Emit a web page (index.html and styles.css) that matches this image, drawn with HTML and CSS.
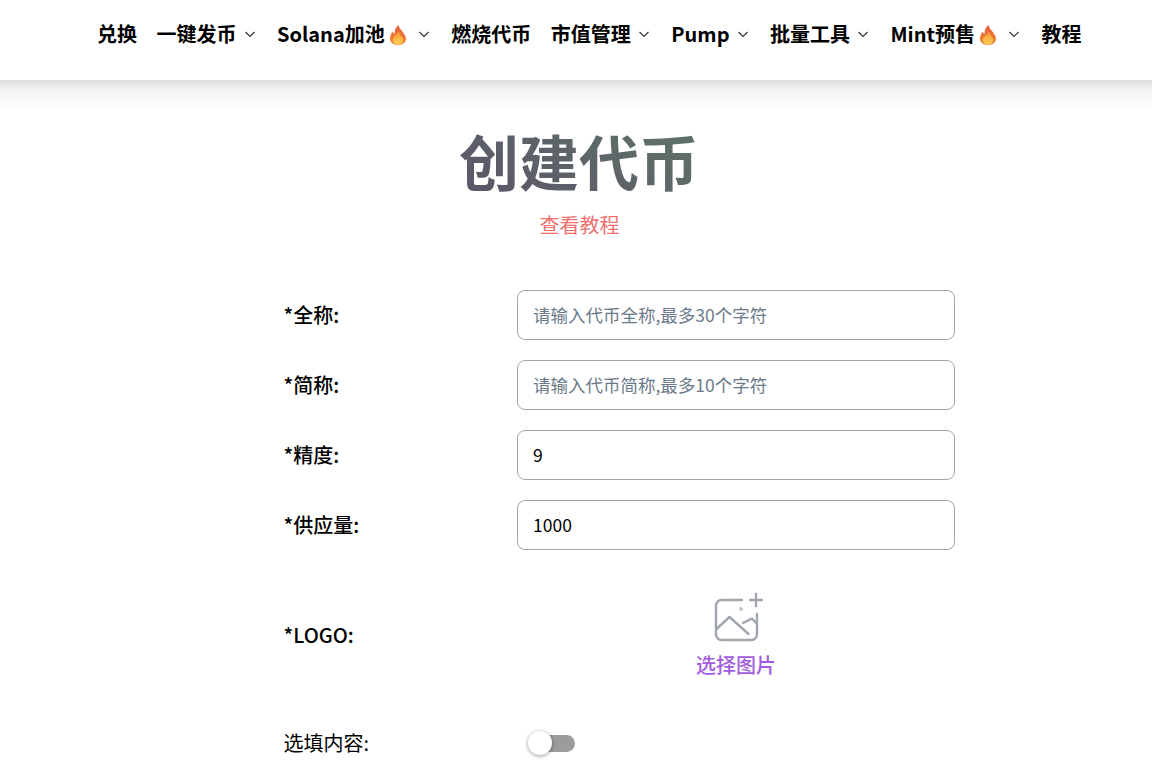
FILE: index.html
```html
<!DOCTYPE html>
<html lang="zh-CN">
<head>
<meta charset="utf-8">
<title>创建代币</title>
<link rel="stylesheet" href="styles.css">
</head>
<body>
<svg class="defs" width="0" height="0" aria-hidden="true">
  <defs>
    <linearGradient id="flame-outer" x1="0" y1="0" x2="0" y2="1">
      <stop offset="0" stop-color="#e5603f"/>
      <stop offset="1" stop-color="#f5882a"/>
    </linearGradient>
    <linearGradient id="flame-inner" x1="0" y1="0" x2="0" y2="1">
      <stop offset="0" stop-color="#fa9a35"/>
      <stop offset="1" stop-color="#fdcf55"/>
    </linearGradient>
    <symbol id="chev" viewBox="0 0 16 16">
      <path d="M3.500 6L8 10.500 12.500 6" fill="none" stroke="#333" stroke-width="1.200"/>
    </symbol>
    <symbol id="flame" viewBox="0 0 16 20">
      <path d="M8.500 0c.6 3 2.500 4.600 4.300 7 1.600 2.200 3.200 4.300 3.200 6.800C16 17.500 12.600 20 8 20s-8-2.500-8-6.200c0-3.200 1.500-5.300 2.700-7.300.4 1.200.9 2 1.800 2.500C4.400 5 5.800 2 8.500 0z" fill="url(#flame-outer)"/>
      <path d="M8.800 6.500c.3 2 1.500 3.200 2.600 4.700.9 1.200 1.800 2.400 1.800 3.900 0 2.800-2.400 4.400-5.200 4.400s-5.200-1.600-5.200-4.400c0-3.500 4.300-4.800 6-8.600z" fill="url(#flame-inner)"/>
    </symbol>
  </defs>
</svg>

<header class="topbar">
  <nav class="nav">
    <a class="nav-item">兑换</a>
    <a class="nav-item">一键发币<svg class="chev"><use href="#chev"/></svg></a>
    <a class="nav-item">Solana加池<svg class="flame"><use href="#flame"/></svg><svg class="chev"><use href="#chev"/></svg></a>
    <a class="nav-item">燃烧代币</a>
    <a class="nav-item">市值管理<svg class="chev"><use href="#chev"/></svg></a>
    <a class="nav-item">Pump<svg class="chev"><use href="#chev"/></svg></a>
    <a class="nav-item">批量工具<svg class="chev"><use href="#chev"/></svg></a>
    <a class="nav-item">Mint预售<svg class="flame"><use href="#flame"/></svg><svg class="chev"><use href="#chev"/></svg></a>
    <a class="nav-item">教程</a>
  </nav>
</header>

<main class="main">
  <div class="head">
    <h1 class="title">创建代币</h1>
    <a class="tutorial">查看教程</a>
  </div>

  <form class="form">
    <div class="row">
      <label class="label">*全称:</label>
      <input class="input" type="text" placeholder="请输入代币全称,最多30个字符">
    </div>
    <div class="row">
      <label class="label">*简称:</label>
      <input class="input" type="text" placeholder="请输入代币简称,最多10个字符">
    </div>
    <div class="row">
      <label class="label">*精度:</label>
      <input class="input" type="text" value="9">
    </div>
    <div class="row">
      <label class="label">*供应量:</label>
      <input class="input" type="text" value="1000">
    </div>
    <div class="row row-logo">
      <label class="label">*LOGO:</label>
      <div class="upload">
        <svg class="upload-icon" viewBox="0 0 50 50" fill="none" stroke="#a0a5ae" stroke-width="2.400" stroke-linecap="round" stroke-linejoin="round">
          <path d="M28 8H7.500A5.500 5.500 0 0 0 2 13.500v29A5.500 5.500 0 0 0 7.500 48h30a5.500 5.500 0 0 0 5.500-5.500V22"/>
          <path d="M2.500 37l13-12 19 17"/>
          <path d="M29 31l9-4.500 5 5.500"/>
          <path d="M36 8h12M42 2v12"/>
          <circle cx="27" cy="17" r=".5"/>
        </svg>
        <span class="upload-text">选择图片</span>
      </div>
    </div>
    <div class="row row-switch">
      <span class="label label-plain">选填内容:</span>
      <span class="switch"><span class="knob"></span></span>
    </div>
  </form>
</main>
</body>
</html>
```
FILE: styles.css
```css
* { box-sizing: border-box; }
html, body { height: 767px; overflow: hidden; }
body {
  margin: 0;
  background: #fff;
  color: #000;
  font-family: "Noto Sans CJK SC", "Noto Sans", sans-serif;
  font-size: 20px;
}
.defs { position: absolute; }
.topbar {
  height: 80px;
  background: #fff;
  position: relative;
}
.topbar::after {
  content: "";
  position: absolute;
  left: 0;
  right: 0;
  top: 100%;
  height: 32px;
  background: linear-gradient(#dcdcdc, #f1f1f1 30%, #fafafa 60%, #fff);
}
.nav {
  height: 80px;
  display: flex;
  align-items: center;
  gap: 19.500px;
  padding: 0 0 12px 97px;
  font-weight: 700;
  white-space: nowrap;
}
.nav-item { display: flex; align-items: center; line-height: 28px; }
.chev { width: 16px; height: 16px; margin-left: 5px; }
.flame { width: 16px; height: 20px; margin: 2px 5px 0 5px; }
.main { padding-top: 38px; position: relative; z-index: 1; }
.head {
  display: flex;
  flex-direction: column;
  align-items: center;
  padding-left: 6px;
}
.title {
  margin: 0;
  font-size: 60px;
  line-height: 84px;
  font-weight: 700;
  background: linear-gradient(30deg, #5b5468, #5f7468);
  -webkit-background-clip: text;
  background-clip: text;
  color: transparent;
}
.tutorial { color: #f07070; line-height: 30px; margin-top: 8px; padding-left: 1px; }
.form {
  margin: 50px 0 0 283.500px;
  width: 671.500px;
  display: flex;
  flex-direction: column;
  gap: 20px;
}
.row { display: grid; grid-template-columns: 233.500px 438px; align-items: center; }
.label { font-weight: 500; line-height: 30px; }
.label-plain { font-weight: 400; }
.input {
  width: 438px;
  height: 50px;
  padding: 0 15px 2px;
  border: 1px solid #a0a4a8;
  border-radius: 8px;
  font: 400 17.500px "Noto Sans CJK SC", "Noto Sans", sans-serif;
  color: #000;
  background: #fff;
  outline: none;
}
.input::placeholder { color: #6b7a8a; opacity: 1; }
.row-logo { height: 130px; }
.upload { display: flex; flex-direction: column; align-items: center; }
.upload-icon { width: 50px; height: 50px; margin: 1.500px 0 7.500px 6px; }
.upload-text { color: #a35ce0; font-weight: 500; line-height: 30px; }
.row-switch { margin-top: 8px; height: 30px; }
.switch {
  position: relative;
  display: block;
  width: 36px;
  height: 17px;
  margin-left: 22px;
  border-radius: 9px;
  background: #9b9b9b;
}
.knob {
  position: absolute;
  left: -11px;
  top: -3.500px;
  width: 24px;
  height: 24px;
  border-radius: 50%;
  background: #fff;
  box-shadow: 0 1px 4px rgba(0, 0, 0, .4);
}
```
